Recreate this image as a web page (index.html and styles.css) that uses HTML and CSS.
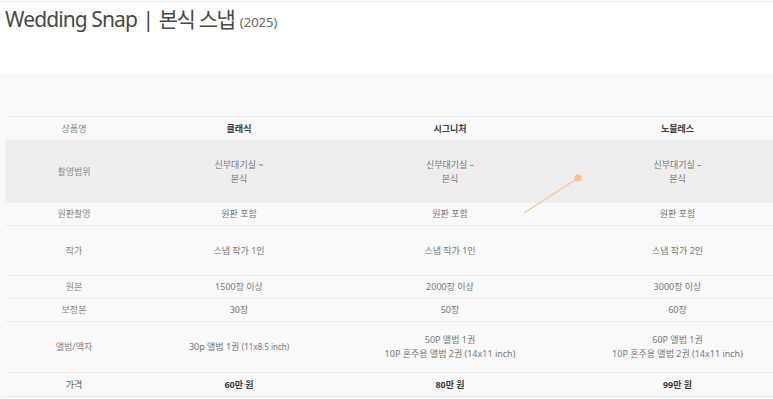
FILE: index.html
```html
<!DOCTYPE html>
<html lang="ko">
<head>
<meta charset="utf-8">
<link rel="stylesheet" href="styles.css">
</head>
<body>
<div class="page">
  <h1 class="title">Wedding Snap <span class="bar">|</span> <span class="ko">본식</span> <span class="ko">스냅</span> <span class="year">(2025)</span></h1>
  <section class="band">
    <table class="price">
      <colgroup>
        <col class="c1"><col class="c2"><col class="c3"><col class="c4">
      </colgroup>
      <tr class="r-head">
        <td class="label">상품명</td>
        <td class="strong">클래식</td>
        <td class="strong">시그니처</td>
        <td class="strong">노블레스</td>
      </tr>
      <tr class="r-range">
        <td class="label">촬영범위</td>
        <td>신부대기실 ~<br>본식</td>
        <td>신부대기실 –<br>본식</td>
        <td>신부대기실 –<br>본식</td>
      </tr>
      <tr class="r-std">
        <td class="label">원판촬영</td>
        <td>원판 포함</td>
        <td>원판 포함</td>
        <td>원판 포함</td>
      </tr>
      <tr class="r-tall">
        <td class="label">작가</td>
        <td>스냅 작가 1인</td>
        <td>스냅 작가 1인</td>
        <td>스냅 작가 2인</td>
      </tr>
      <tr class="r-std">
        <td class="label">원본</td>
        <td>1500장 이상</td>
        <td>2000장 이상</td>
        <td>3000장 이상</td>
      </tr>
      <tr class="r-std">
        <td class="label">보정본</td>
        <td>30장</td>
        <td>50장</td>
        <td>60장</td>
      </tr>
      <tr class="r-album">
        <td class="label">앨범/액자</td>
        <td>30p 앨범 1권 <span class="small">(11x8.5 inch)</span></td>
        <td>50P 앨범 1권<br>10P 혼주용 앨범 2권 (14x11 inch)</td>
        <td>60P 앨범 1권<br>10P 혼주용 앨범 2권 (14x11 inch)</td>
      </tr>
      <tr class="r-price">
        <td class="label">가격</td>
        <td class="strong">60만 원</td>
        <td class="strong">80만 원</td>
        <td class="strong">99만 원</td>
      </tr>
    </table>
  </section>
  <svg class="pointer" width="70" height="50" viewBox="0 0 70 50">
    <line x1="4" y1="46" x2="58" y2="11" stroke="#f8c49b" stroke-width="1.4"/>
    <circle cx="58" cy="11" r="3.6" fill="#f8bf92"/>
  </svg>
</div>
</body>
</html>
```

FILE: styles.css
```css
html, body {
  margin: 0;
  padding: 0;
  background: #ffffff;
  overflow: hidden;
}
body {
  font-family: "Noto Sans", "Noto Sans CJK KR", sans-serif;
  color: #777;
}
.page {
  position: relative;
  border-top: 1px solid #ececec;
  margin-top: 1px;
  height: 397px;
}
.title {
  margin: 0;
  padding: 4px 0 0 5px;
  height: 71px;
  box-sizing: border-box;
  font-size: 21px;
  font-weight: 400;
  color: #484848;
  line-height: 26px;
  letter-spacing: -0.9px;
  white-space: nowrap;
}
.bar {
  margin: 0 1px;
}
.ko {
  letter-spacing: -1.6px;
}
.year {
  font-size: 13px;
  font-weight: 400;
  letter-spacing: 0;
  color: #666;
  margin-left: 1px;
}
.band {
  background: #f9f9f9;
  padding: 43px 0 0 5px;
  width: 800px;
  height: 340px;
  box-sizing: border-box;
}
.price {
  border-collapse: collapse;
  table-layout: fixed;
  width: 785px;
  font-size: 9px;
  line-height: 14px;
  border-top: 1px solid #ececec;
}
.c1 { width: 138px; }
.c2 { width: 192px; }
.c3 { width: 230px; }
.c4 { width: 225px; }
.price td {
  text-align: center;
  vertical-align: middle;
  padding: 0;
  border-bottom: 1px solid #ececec;
  color: #777;
}
.price td.label { color: #888; }
.price td.strong { font-weight: 700; color: #3c3c3c; }
.r-head td { height: 23px; border-bottom: none; }
.r-range td { height: 63px; background: #eeeeee; border-bottom: none; }
.r-std td { height: 22px; }
.r-tall td { height: 49px; }
.r-album td { height: 50px; }
.r-price td { height: 23px; }
.r-price td.label { color: #555; }
.small { font-size: 8px; }
.pointer {
  position: absolute;
  left: 520px;
  top: 165px;
}
```
